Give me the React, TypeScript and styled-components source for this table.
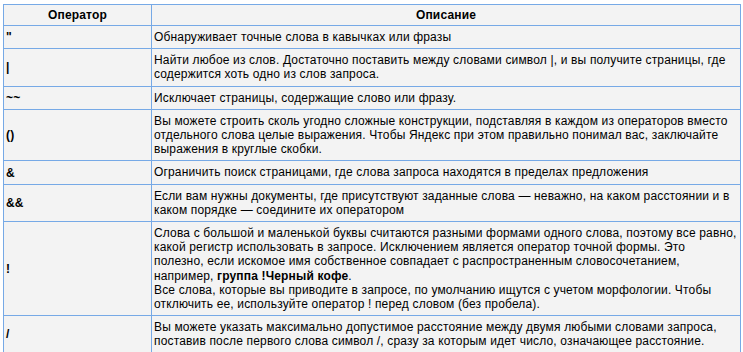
import React from "react";
import styled, { createGlobalStyle } from "styled-components";

const Global = createGlobalStyle`
  html, body { margin: 0; padding: 0; background: #ffffff; }
  body { font-family: "Liberation Sans", Arial, sans-serif; }
`;

const Page = styled.div`
  padding: 4px 2px 0 3px;
`;

const Table = styled.table`
  width: 738px;
  border-collapse: collapse;
  background: #f3f3f3;
  font-family: "Liberation Sans", Arial, sans-serif;
  font-size: 12px;
  letter-spacing: 0.16px;
  color: #000;
  border: 1px solid #76a9e6;
`;

const Th = styled.th<{ $w?: number }>`
  border: 1px solid #76a9e6;
  padding: 3px 2px;
  font-weight: bold;
  text-align: center;
  line-height: 14px;
  ${(p) => (p.$w ? `width: ${p.$w}px;` : "")}
`;

const OpCell = styled.td`
  border: 1px solid #76a9e6;
  padding: 4px 2px;
  font-weight: bold;
  vertical-align: middle;
  line-height: 14px;
`;

const DescCell = styled.td`
  border: 1px solid #76a9e6;
  padding: 4px 2px;
  vertical-align: middle;
  line-height: 14.2px;
`;

type Row = { op: string; desc: React.ReactNode };

const rows: Row[] = [
  { op: "\"", desc: "Обнаруживает точные слова в кавычках или фразы" },
  {
    op: "|",
    desc: "Найти любое из слов. Достаточно поставить между словами символ |, и вы получите страницы, где содержится хоть одно из слов запроса.",
  },
  { op: "~~", desc: "Исключает страницы, содержащие слово или фразу." },
  {
    op: "()",
    desc: "Вы можете строить сколь угодно сложные конструкции, подставляя в каждом из операторов вместо отдельного слова целые выражения. Чтобы Яндекс при этом правильно понимал вас, заключайте выражения в круглые скобки.",
  },
  { op: "&", desc: "Ограничить поиск страницами, где слова запроса находятся в пределах предложения" },
  {
    op: "&&",
    desc: "Если вам нужны документы, где присутствуют заданные слова — неважно, на каком расстоянии и в каком порядке — соедините их оператором",
  },
  {
    op: "!",
    desc: (
      <>
        Слова с большой и маленькой буквы считаются разными формами одного слова, поэтому все равно,
        какой регистр использовать в запросе. Исключением является оператор точной формы. Это
        полезно, если искомое имя собственное совпадает с распространенным словосочетанием,
        например, <b>группа !Черный кофе</b>.
        <br />
        Все слова, которые вы приводите в запросе, по умолчанию ищутся с учетом морфологии. Чтобы
        отключить ее, используйте оператор ! перед словом (без пробела).
      </>
    ),
  },
  {
    op: "/",
    desc: "Вы можете указать максимально допустимое расстояние между двумя любыми словами запроса, поставив после первого слова символ /, сразу за которым идет число, означающее расстояние.",
  },
];

export default function App() {
  return (
    <>
      <Global />
      <Page>
        <Table>
          <thead>
            <tr>
              <Th $w={143}>Оператор</Th>
              <Th>Описание</Th>
            </tr>
          </thead>
          <tbody>
            {rows.map((r, i) => (
              <tr key={i}>
                <OpCell>{r.op}</OpCell>
                <DescCell>{r.desc}</DescCell>
              </tr>
            ))}
          </tbody>
        </Table>
      </Page>
    </>
  );
}
